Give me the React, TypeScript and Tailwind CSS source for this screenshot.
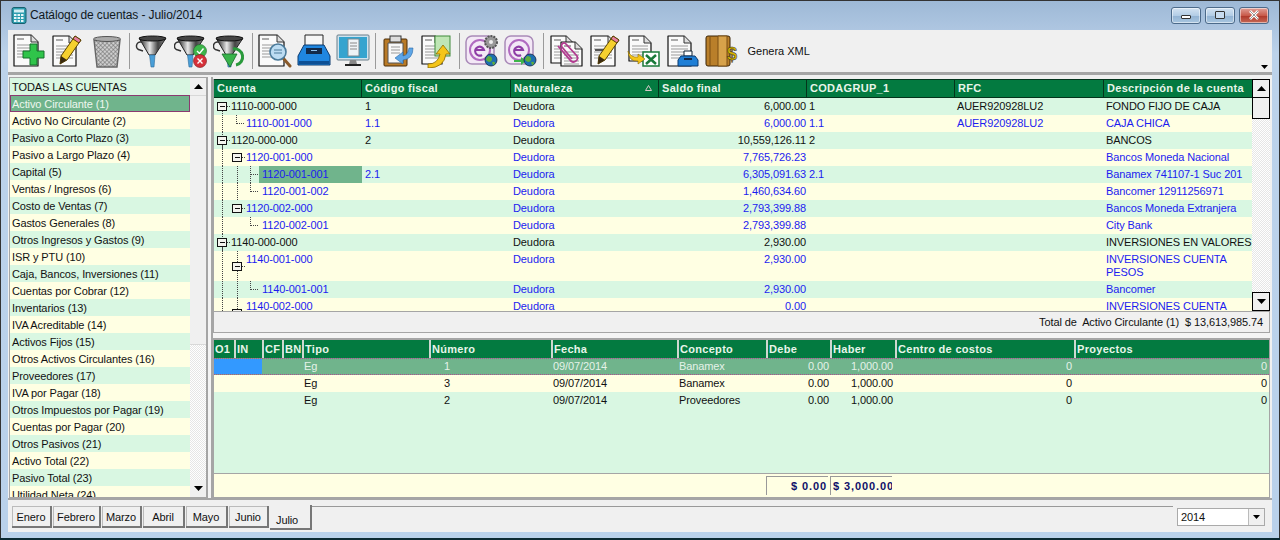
import type { ReactNode } from "react";

const GREEN = "bg-[#d9f7e2]";
const YELLOW = "bg-[#ffffe3]";

const sideItems = [
  "Activo Circulante (1)", "Activo No Circulante (2)", "Pasivo a Corto Plazo (3)", "Pasivo a Largo Plazo (4)",
  "Capital (5)", "Ventas / Ingresos (6)", "Costo de Ventas (7)", "Gastos Generales (8)", "Otros Ingresos y Gastos (9)",
  "ISR y PTU (10)", "Caja, Bancos, Inversiones (11)", "Cuentas por Cobrar (12)", "Inventarios (13)", "IVA Acreditable (14)",
  "Activos Fijos (15)", "Otros Activos Circulantes (16)", "Proveedores (17)", "IVA por Pagar (18)",
  "Otros Impuestos por Pagar (19)", "Cuentas por Pagar (20)", "Otros Pasivos (21)", "Activo Total (22)",
  "Pasivo Total (23)", "Utilidad Neta (24)",
];

type TreeRow = {
  cuenta: string;
  codigo?: string;
  saldo: string;
  agrup?: string;
  rfc?: string;
  desc: string;
  blue?: boolean;
  tall?: boolean;
  lines: number[]; // vertical dotted guides
  box?: number;
  corner?: number;
  tee?: number;
  indent: number;
  selected?: boolean;
};

const treeRows: TreeRow[] = [
  { cuenta: "1110-000-000", codigo: "1", saldo: "6,000.00", agrup: "1", rfc: "AUER920928LU2", desc: "FONDO FIJO DE CAJA", lines: [], box: 8, indent: 17 },
  { cuenta: "1110-001-000", codigo: "1.1", saldo: "6,000.00", agrup: "1.1", rfc: "AUER920928LU2", desc: "CAJA CHICA", blue: true, lines: [8], corner: 23, indent: 32 },
  { cuenta: "1120-000-000", codigo: "2", saldo: "10,559,126.11", agrup: "2", desc: "BANCOS", lines: [8], box: 8, indent: 17 },
  { cuenta: "1120-001-000", saldo: "7,765,726.23", desc: "Bancos Moneda Nacional", blue: true, lines: [8], box: 23, indent: 32 },
  { cuenta: "1120-001-001", codigo: "2.1", saldo: "6,305,091.63", agrup: "2.1", desc: "Banamex 741107-1 Suc 201", blue: true, lines: [8, 23], tee: 37, indent: 45, selected: true },
  { cuenta: "1120-001-002", saldo: "1,460,634.60", desc: "Bancomer 12911256971", blue: true, lines: [8, 23], corner: 37, indent: 48 },
  { cuenta: "1120-002-000", saldo: "2,793,399.88", desc: "Bancos Moneda Extranjera", blue: true, lines: [8], box: 23, indent: 32 },
  { cuenta: "1120-002-001", saldo: "2,793,399.88", desc: "City Bank", blue: true, lines: [8], corner: 37, indent: 48 },
  { cuenta: "1140-000-000", saldo: "2,930.00", desc: "INVERSIONES EN VALORES", lines: [8], box: 8, indent: 17 },
  { cuenta: "1140-001-000", saldo: "2,930.00", desc: "INVERSIONES CUENTA PESOS", blue: true, tall: true, lines: [8, 23], box: 23, indent: 32 },
  { cuenta: "1140-001-001", saldo: "2,930.00", desc: "Bancomer", blue: true, lines: [8, 23], corner: 37, indent: 48 },
  { cuenta: "1140-002-000", saldo: "0.00", desc: "INVERSIONES CUENTA PESOS", blue: true, tall: true, lines: [8, 23], box: 23, indent: 32 },
];

const GRID1 = "grid grid-cols-[148px_149px_148px_148px_148px_149px_148px]";
const GRID2 = "grid grid-cols-[20px_28px_20px_20px_127px_122px_126px_89px_64px_65px_179px_195px]";

const polizas = [
  { tipo: "Eg", num: "1", fecha: "09/07/2014", concepto: "Banamex" },
  { tipo: "Eg", num: "3", fecha: "09/07/2014", concepto: "Banamex" },
  { tipo: "Eg", num: "2", fecha: "09/07/2014", concepto: "Proveedores" },
];

function TreeGlyph({ row }: { row: TreeRow }) {
  const h = row.tall ? 30 : 17;
  const cy = Math.floor(h / 2) + 0.5;
  return (
    <svg width={row.indent} height={h} className="shrink-0" shapeRendering="crispEdges">
      {row.lines.map((x) => (
        <line key={x} x1={x + 0.5} x2={x + 0.5} y1={0} y2={h} stroke="#444" strokeDasharray="1 1" />
      ))}
      {row.box === 8 && <line x1={8.5} x2={8.5} y1={cy} y2={h} stroke="#444" strokeDasharray="1 1" />}
      {row.corner !== undefined && (
        <>
          <line x1={row.corner - 0.5} x2={row.corner - 0.5} y1={0} y2={cy} stroke="#444" strokeDasharray="1 1" />
          <line x1={row.corner - 0.5} x2={row.corner + 8} y1={cy} y2={cy} stroke="#444" strokeDasharray="1 1" />
        </>
      )}
      {row.tee !== undefined && (
        <>
          <line x1={row.tee - 0.5} x2={row.tee - 0.5} y1={0} y2={h} stroke="#444" strokeDasharray="1 1" />
          <line x1={row.tee - 0.5} x2={row.tee + 8} y1={cy} y2={cy} stroke="#444" strokeDasharray="1 1" />
        </>
      )}
      {row.box !== undefined && (
        <>
          <line x1={row.box + 5} x2={row.box + 8} y1={cy} y2={cy} stroke="#444" strokeDasharray="1 1" />
          <rect x={row.box - 4.5} y={cy - 4} width={9} height={8} fill="#f4f4ee" stroke="#111" />
          <line x1={row.box - 2} x2={row.box + 3} y1={cy} y2={cy} stroke="#111" />
        </>
      )}
    </svg>
  );
}

// --- toolbar drawings ---
function Page({ x = 4, y = 2, w = 22, h = 29 }: { x?: number; y?: number; w?: number; h?: number }) {
  const r = x + w;
  const b = y + h;
  return (
    <g>
      <path d={`M${x} ${y}H${r - 7}L${r} ${y + 7}V${b}H${x}Z`} fill="#fafafa" stroke="#111" strokeWidth="1.2" strokeLinejoin="round" />
      <path d={`M${r - 7} ${y}V${y + 7}H${r}`} fill="#ddd" stroke="#333" />
      <path d={`M${x + 3} ${y + 4}h7`} stroke="#888" strokeWidth="1.4" />
      {[10, 13, 16, 19, 22].map((d) => (
        <path key={d} d={`M${x + 3} ${y + d}H${r - 3}`} stroke="#999" />
      ))}
    </g>
  );
}

function Pencil({ dx = 0, dy = 0 }: { dx?: number; dy?: number }) {
  return (
    <g transform={`translate(${dx} ${dy})`}>
      <path d="M24 2l6 4-14 20-7 4 1-8z" fill="#f6d02e" stroke="#5a4300" />
      <path d="M24 2l6 4-2 3-6-4z" fill="#e77fa0" stroke="#5a4300" />
      <path d="M9 30l1-8 6 4z" fill="#3a2a10" />
    </g>
  );
}

function Funnel({ small }: { small?: boolean }) {
  return (
    <g transform={small ? "translate(-1 0)" : undefined}>
      <defs>
        <linearGradient id="metal" x1="0" x2="1">
          <stop offset="0" stopColor="#111" />
          <stop offset="0.4" stopColor="#e8e8e8" />
          <stop offset="0.7" stopColor="#444" />
          <stop offset="1" stopColor="#888" />
        </linearGradient>
      </defs>
      <path d="M6 8a4 4 0 0 0-1 8l3 1" fill="none" stroke="#333" strokeWidth="1.5" />
      <path d="M4 4h27L20 21h-6z" fill="url(#metal)" stroke="#222" />
      <ellipse cx="17.500" cy="4.500" rx="13.500" ry="2.500" fill="#444" stroke="#111" />
      <path d="M14.500 21h5.500l-1 12h-3z" fill="#4a9fd8" stroke="#2b6a99" strokeWidth="0.6" />
    </g>
  );
}

function ESpiral() {
  return (
    <g>
      <rect x="1" y="2" width="28" height="28" rx="6" fill="#f3e8f6" stroke="#a98ab8" strokeWidth="1.5" />
      <circle cx="15" cy="16" r="10" fill="none" stroke="#b06ac0" strokeWidth="2" />
      <path d="M10 16h9a4.500 4.500 0 1 0-2 5" fill="none" stroke="#8e3ca6" strokeWidth="2.200" />
    </g>
  );
}

function Globe({ cx = 26, cy = 26, r = 6 }: { cx?: number; cy?: number; r?: number }) {
  return (
    <g>
      <circle cx={cx} cy={cy} r={r} fill="#1d6fb0" stroke="#124" strokeWidth="0.8" />
      <path d={`M${cx - 3} ${cy - 4}q4 0 4 3t-3 3q-3-1-3-3zM${cx + 1} ${cy + 2}q3-1 3 1t-2 2z`} fill="#5fae3c" />
    </g>
  );
}

const toolbarIcons: ReactNode[][] = [
  [
    <>
      <Page x={2} y={1} w={24} h={31} />
      <path d="M18 10h7v7h7v7h-7v7h-7v-7h-7v-7h7z" fill="#2fc44a" stroke="#14702a" />
    </>,
    <>
      <Page x={2} y={2} w={23} h={30} />
      <Pencil />
    </>,
    <>
      <defs>
        <pattern id="mesh" width="3" height="3" patternUnits="userSpaceOnUse" patternTransform="rotate(45)">
          <rect width="3" height="3" fill="#cfcfcf" />
          <path d="M0 0h3M0 0v3" stroke="#666" />
        </pattern>
      </defs>
      <path d="M4 6h26l-3 27H7z" fill="url(#mesh)" stroke="#666" strokeWidth="1.4" />
      <ellipse cx="17" cy="5" rx="13.500" ry="2.500" fill="#aaa" stroke="#555" />
    </>,
  ],
  [
    <Funnel />,
    <>
      <Funnel small />
      <circle cx="26" cy="17" r="6.500" fill="#3db54a" stroke="#1d6b2a" strokeWidth="0.6" />
      <path d="M23 17l2.500 2.500 4-5" fill="none" stroke="#fff" strokeWidth="1.4" />
      <circle cx="26" cy="27" r="6.500" fill="#d6313a" stroke="#7a1318" strokeWidth="0.6" />
      <path d="M23.500 24.500l5 5m0-5l-5 5" stroke="#fff" strokeWidth="1.4" />
    </>,
    <>
      <Funnel small />
      <path d="M9 20l8 13 7-13z" fill="#38b34a" stroke="#17692a" strokeWidth="0.8" />
      <path d="M20 15a8 8 0 1 1 3 16" fill="none" stroke="#2a9a3c" strokeWidth="3" />
    </>,
  ],
  [
    <>
      <Page x={1} y={1} w={25} h={31} />
      <path d="M25 24l7 8" stroke="#8a5a2a" strokeWidth="3" strokeLinecap="round" />
      <circle cx="20" cy="18" r="8" fill="#bcdcf2" stroke="#4a7a9a" strokeWidth="1.6" />
      <path d="M16 16h8M16 19h8" stroke="#4a7a9a" />
    </>,
    <>
      <path d="M8 1h18v13H8z" fill="#f6f6f6" stroke="#222" />
      <path d="M7 11h20l6 11v9H1v-9z" fill="#1f86e0" stroke="#0c3a6e" />
      <rect x="9" y="14" width="16" height="6" fill="#122a4a" />
      <rect x="14" y="16" width="6" height="1" fill="#8fc2ee" />
      <rect x="2" y="27" width="30" height="3" fill="#0d4f94" />
    </>,
    <>
      <rect x="1" y="1" width="32" height="25" rx="1" fill="#cfe3ee" stroke="#6a7f8a" />
      <rect x="3" y="3" width="28" height="21" fill="#35a4cf" />
      <rect x="12" y="5" width="11" height="17" fill="#eef4f7" stroke="#7a8a92" />
      <path d="M14 9h7M14 12h7M14 15h7" stroke="#888" />
      <path d="M14 26h6l1 4h-8z" fill="#888" />
      <rect x="9" y="30" width="16" height="2" fill="#222" />
    </>,
  ],
  [
    <>
      <rect x="3" y="5" width="23" height="27" rx="1" fill="#b97a26" stroke="#4a2c08" />
      <rect x="9" y="2" width="11" height="6" fill="#ddd" stroke="#333" />
      <path d="M7 9h15v20H7z" fill="#f8f8f8" stroke="#555" />
      <path d="M10 13h9M10 16h9M10 19h9" stroke="#999" />
      <path d="M32 14q0 11-10 12v4l-8-6 8-6v4q5-1 6-8z" fill="#5da5e6" stroke="#2a6aa8" strokeWidth="0.6" />
    </>,
    <>
      <Page x={2} y={2} w={20} h={28} />
      <rect x="15" y="2" width="15" height="20" fill="#bfe6b5" stroke="#3f8a3a" />
      <path d="M8 30q10 0 12-10h-4l7-9 7 9h-4q-2 14-18 14z" fill="#f5c518" stroke="#8a6a00" strokeWidth="0.8" />
    </>,
  ],
  [
    <>
      <ESpiral />
      <circle cx="26" cy="8" r="6" fill="#999" stroke="#555" strokeWidth="2" strokeDasharray="2 1" />
      <circle cx="26" cy="8" r="2" fill="#eee" />
      <Globe />
    </>,
    <>
      <ESpiral />
      <path d="M10 26h7v-3l5 4-5 4v-3h-7z" fill="#3db54a" />
      <Globe />
    </>,
  ],
  [
    <>
      <Page x={2} y={2} w={22} h={27} />
      <Page x={12} y={8} w={21} h={24} />
      <path d="M9 12l13 15a4 4 0 0 0 6-5L17 10a2.500 2.500 0 0 0-4 3l10 12" fill="none" stroke="#b23a90" strokeWidth="1.8" />
    </>,
    <>
      <Page x={3} y={2} w={24} h={30} />
      <rect x="7" y="15" width="16" height="2" fill="#555" />
      <Pencil dx={1} dy={0} />
    </>,
    <>
      <Page x={2} y={2} w={22} h={25} />
      <rect x="16" y="18" width="16" height="14" fill="#fff" stroke="#1a7a3a" strokeWidth="1.5" />
      <path d="M19 21l10 9m0-9l-10 9" stroke="#1a7a3a" strokeWidth="2.500" />
      <path d="M1 17q3 7 10 6v-3l7 5-7 5v-3Q2 28 1 17z" fill="#f5c518" stroke="#8a6a00" strokeWidth="0.6" />
    </>,
    <>
      <Page x={2} y={2} w={23} h={30} />
      <path d="M18 17h8v5h-8z" fill="#fff" stroke="#123" />
      <path d="M15 22h14l3 4v6H12v-6z" fill="#1f7fd6" stroke="#0c3a6e" />
      <rect x="18" y="24" width="8" height="2" fill="#122a4a" />
    </>,
    <>
      <rect x="1" y="2" width="24" height="30" rx="2" fill="#b97f2a" stroke="#3a2406" />
      <path d="M5 2v30" stroke="#7a4f12" />
      <path d="M13 2h9v30h-9z" fill="#d7a24a" stroke="#7a4f12" />
      <text x="22" y="26" fontSize="18" fontWeight="bold" fill="#d8b400" stroke="#222" strokeWidth="0.5" fontFamily="Liberation Sans, sans-serif">$</text>
    </>,
  ],
];

function ToolButton({ children }: { children: ReactNode }) {
  return (
    <div className="flex w-[39px] shrink-0 justify-center">
      <svg width="34" height="34" viewBox="0 0 34 34">{children}</svg>
    </div>
  );
}

function Arrow({ up }: { up?: boolean }) {
  return (
    <svg width="9" height="5" viewBox="0 0 9 5">
      <path d={up ? "M4.500 0L9 5H0z" : "M0 0h9L4.500 5z"} fill="#000" />
    </svg>
  );
}

function WinButton({ children, danger }: { children: ReactNode; danger?: boolean }) {
  return (
    <div
      className={`flex h-[17px] w-[30px] items-center justify-center rounded-[3px] border border-[#4c6a8a] shadow-[inset_0_0_0_1px_rgba(255,255,255,0.5)] ${
        danger
          ? "bg-[linear-gradient(#e0a098,#c85a4a_50%,#b03a2c_55%,#c66a58)]"
          : "bg-[linear-gradient(#d4e3f2,#b3cde6_50%,#94b4d4_55%,#a8c6e0)]"
      }`}
    >
      {children}
    </div>
  );
}

const months = [
  ["Enero", "w-[40px]"],
  ["Febrero", "w-[48px]"],
  ["Marzo", "w-[40px]"],
  ["Abril", "w-[42px]"],
  ["Mayo", "w-[42px]"],
  ["Junio", "w-[40px]"],
];

export default function App() {
  return (
    <div className="flex h-[540px] w-[1280px] flex-col overflow-hidden border-b-2 border-b-[#0b2a33] bg-[linear-gradient(#9db8d6,#bcd2ea_10%,#b9d1ea)] font-['Liberation_Sans',sans-serif] text-[11px] leading-[13px] tracking-[-0.1px] text-[#111] shadow-[inset_0_1px_0_#333,inset_1px_0_0_#333,inset_-1px_0_0_#333]">
      {/* title bar */}
      <div className="flex h-[30px] shrink-0 items-center px-[11px]">
        <svg width="16" height="17" viewBox="0 0 16 17">
          <rect x="1" y="0.500" width="14" height="16" rx="2" fill="#2f9eb0" stroke="#17606e" />
          <rect x="3" y="2.500" width="10" height="3" fill="#d4eef2" />
          {[7, 10, 13].map((y) =>
            [3, 6.5, 10].map((x) => <rect key={`${x}-${y}`} x={x} y={y} width="2.500" height="2" fill="#e8f6f8" />),
          )}
        </svg>
        <span className="ml-[3px] text-[12px] text-[#101820]">Catálogo de cuentas - Julio/2014</span>
        <div className="ml-auto flex items-center gap-[4px]">
          <WinButton>
            <div className="mt-[4px] h-[4px] w-[10px] rounded-[1px] border border-[#333] bg-white" />
          </WinButton>
          <WinButton>
            <div className="h-[8px] w-[10px] rounded-[1px] border-[1.5px] border-[#333] bg-[#c8dcf0]" />
          </WinButton>
          <WinButton danger>
            <svg width="12" height="10" viewBox="0 0 12 10">
              <path d="M2 1l8 8m0-8L2 9" stroke="#fff" strokeWidth="2.500" />
              <path d="M2 1l8 8m0-8L2 9" stroke="#333" strokeWidth="0.5" />
            </svg>
          </WinButton>
        </div>
      </div>

      <div className="mx-[8px] flex min-h-0 flex-1 flex-col bg-[#f0f0f0]">
        {/* toolbar */}
        <div className="relative flex h-[45px] shrink-0 items-center border-b-[3px] border-b-[#a5a5a5] pl-[1.500px]">
          {toolbarIcons.map((group, g) => (
            <div key={g} className="flex items-center">
              {g > 0 && <div className="mx-[2.500px] h-[36px] w-px bg-[#9a9a9a]" />}
              {group.map((icon, i) => (
                <ToolButton key={i}>{icon}</ToolButton>
              ))}
            </div>
          ))}
          <span className="ml-[6px] tracking-normal">Genera XML</span>
          <div className="absolute bottom-[3px] right-[4px] leading-[0]">
            <svg width="7" height="4" viewBox="0 0 7 4">
              <path d="M0 0h7L3.500 4z" fill="#000" />
            </svg>
          </div>
        </div>

        {/* panels */}
        <div className="flex h-[423px] shrink-0 pl-px pr-[2px] pt-[2px]">
          {/* accounts list */}
          <div className="flex h-[421px] w-[197px] shrink-0 overflow-hidden border border-r-0 border-[#a5a5a5]">
            <div className="w-[180px] shrink-0 overflow-hidden">
              <div className={`h-[17px] px-[2px] leading-[18px] ${GREEN}`}>TODAS LAS CUENTAS</div>
              {sideItems.map((item, i) =>
                i === 0 ? (
                  <div key={item} className="h-[17px] border border-[#8a3a70] bg-[#70b48c] px-px leading-[16px] text-[#eef7ef]">
                    {item}
                  </div>
                ) : (
                  <div key={item} className={`h-[17px] px-[2px] leading-[18px] ${i % 2 === 1 ? YELLOW : GREEN}`}>
                    {item}
                  </div>
                ),
              )}
            </div>
            <div className="flex w-[16px] shrink-0 flex-col bg-[repeating-conic-gradient(#fff_0_25%,#e6e6e6_0_50%)] bg-[length:2px_2px]">
              <div className="flex h-[17px] items-center justify-center bg-[#f0f0f0]">
                <Arrow up />
              </div>
              <div className="h-[250px] border-y border-[#d8d8d8] bg-[#f0f0f0]" />
              <div className="mt-auto flex h-[17px] items-center justify-center bg-[#f0f0f0]">
                <Arrow />
              </div>
            </div>
          </div>

          {/* splitter */}
          <div className="w-[7px] shrink-0 border-x-[2px] border-x-[#a5a5a5] bg-[#f4f4f4]" />

          {/* right side */}
          <div className="flex h-[421px] min-w-0 flex-1 flex-col pt-[2px]">
            <div className="flex h-[232px] shrink-0 overflow-hidden border-l border-[#a5a5a5]">
              <div className="w-[1038px] shrink-0 overflow-hidden">
                <div className={`${GRID1} h-[19px] border-y border-[#04341c] bg-[#037a40] font-bold tracking-[0.3px] text-[#e8f5ea]`}>
                  {["Cuenta", "Código fiscal", "Naturaleza", "Saldo final", "CODAGRUP_1", "RFC", "Descripción de la cuenta"].map((h) => (
                    <div key={h} className="relative overflow-hidden whitespace-nowrap border-r border-[#04341c] pl-[3px] leading-[17px] last:border-r-0">
                      {h}
                      {h === "Naturaleza" && (
                        <svg className="absolute right-[6px] top-[5px]" width="7" height="6" viewBox="0 0 7 6">
                          <path d="M3.500 0.500L6.500 5.500H0.500z" fill="none" stroke="#d8c8c8" />
                        </svg>
                      )}
                    </div>
                  ))}
                </div>
                {treeRows.map((r, i) => (
                  <div
                    key={r.cuenta}
                    className={`${GRID1} ${r.tall ? "h-[30px]" : "h-[17px]"} ${i % 2 === 0 ? GREEN : YELLOW} ${r.blue ? "text-[#1c1cf0]" : "text-[#111]"}`}
                  >
                    <div className="flex h-full overflow-hidden">
                      <TreeGlyph row={r} />
                      {r.selected ? (
                        <div className="w-full bg-[#70b48c] pl-[3px] pt-[2px]">{r.cuenta}</div>
                      ) : (
                        <div className="pt-[2px]">{r.cuenta}</div>
                      )}
                    </div>
                    <div className="pl-[3px] pt-[2px]">{r.codigo}</div>
                    <div className="pl-[2px] pt-[2px]">Deudora</div>
                    <div className="pr-px pt-[2px] text-right">{r.saldo}</div>
                    <div className="pl-[2px] pt-[2px]">{r.agrup}</div>
                    <div className="pl-[2px] pt-[2px]">{r.rfc}</div>
                    <div className={`pl-[2px] pt-[2px] ${r.tall ? "" : "overflow-hidden whitespace-nowrap"}`}>{r.desc}</div>
                  </div>
                ))}
              </div>
              <div className="flex w-[18px] shrink-0 flex-col bg-[repeating-conic-gradient(#fff_0_25%,#e6e6e6_0_50%)] bg-[length:2px_2px]">
                <div className="flex h-[19px] items-center justify-center border border-black bg-[#f0f0f0]">
                  <Arrow up />
                </div>
                <div className="h-[21px] border border-t-0 border-black bg-[#f0f0f0]" />
                <div className="mt-auto flex h-[19px] items-center justify-center border border-black bg-[#f0f0f0]">
                  <Arrow />
                </div>
              </div>
            </div>
            <div className="flex h-[22px] shrink-0 items-center justify-end border border-[#a5a5a5] bg-[#f0f0f0] pr-[6px]">
              Total de&nbsp; Activo Circulante (1)&nbsp; $ 13,613,985.74
            </div>

            <div className="h-[7px] shrink-0 border-b-[2px] border-b-[#a5a5a5] bg-[#f4f4f4]" />

            <div className="flex min-h-0 flex-1 flex-col border-x border-b border-[#a5a5a5]">
              <div className={`${GRID2} h-[18px] shrink-0 bg-[#037a40] font-bold tracking-[0.3px] text-[#e8f5ea]`}>
                {["O1", "IN", "CF", "BN", "Tipo", "Número", "Fecha", "Concepto", "Debe", "Haber", "Centro de costos", "Proyectos"].map((h) => (
                  <div key={h} className="overflow-hidden whitespace-nowrap border-l-[2px] border-[#cfd8d0] pl-px leading-[18px] first:border-l-0">
                    {h}
                  </div>
                ))}
              </div>
              <div className={`min-h-0 flex-1 ${GREEN}`}>
                {polizas.map((p, i) => (
                  <div
                    key={p.num}
                    className={`${GRID2} h-[17px] leading-[15px] ${
                      i === 0
                        ? "border-y border-dotted border-[#b04a90] bg-[#70b48c] text-[#e4f2e8]"
                        : i === 1
                          ? `${YELLOW} border-y border-transparent`
                          : `${GREEN} border-y border-transparent`
                    }`}
                  >
                    <div className={`col-span-2 ${i === 0 ? "bg-[#3399ff]" : ""}`} />
                    <div />
                    <div />
                    <div className="pl-[2px]">{p.tipo}</div>
                    <div className="pl-[15px]">{p.num}</div>
                    <div className="pl-[2px]">{p.fecha}</div>
                    <div className="pl-[2px]">{p.concepto}</div>
                    <div className="pr-px text-right">0.00</div>
                    <div className="pr-[2px] text-right">1,000.00</div>
                    <div className="pr-[2px] text-right">0</div>
                    <div className="pr-[2px] text-right">0</div>
                  </div>
                ))}
              </div>
              <div className={`flex h-[24px] shrink-0 items-center border-t border-[#a5a5a5] pl-[552px] font-bold tracking-[0.9px] text-[#10106a] ${YELLOW}`}>
                <div className="h-[19px] w-[62px] border-l border-t border-[#999] pr-px text-right leading-[18px]">$ 0.00</div>
                <div className="ml-[2px] h-[19px] w-[62px] overflow-hidden whitespace-nowrap border-l border-t border-[#999] pl-[2px] leading-[18px]">$ 3,000.00</div>
              </div>
            </div>
          </div>
        </div>

        {/* month tabs */}
        <div className="flex h-[34px] shrink-0 items-start border-t-2 border-t-[#a5a5a5] pl-[4px]">
          <div className="flex pt-[6px]">
            {months.map(([m, w]) => (
              <div
                key={m}
                className={`${w} mr-px h-[22px] border-b-2 border-r-2 border-b-[#777] border-r-[#777] bg-[#f0f0f0] text-center leading-[22px] shadow-[inset_1px_1px_0_#bbb]`}
              >
                {m}
              </div>
            ))}
          </div>
          <div className="mt-[5px] h-[25px] w-[42px] border-b-2 border-r-2 border-b-[#777] border-r-[#777] bg-[#f0f0f0] pl-[6px] pt-[9px]">Julio</div>
          <div className="mt-[6px] h-[24px] w-[861px] border-t border-[#999]" />
          <div className="ml-[4px] mt-[8px] flex h-[18px] w-[88px] items-center border border-[#aaa] bg-white pl-[3px]">
            2014
            <div className="ml-auto flex h-[16px] w-[16px] items-center justify-center border-l border-[#bbb] bg-[#f0f0f0]">
              <svg width="7" height="4" viewBox="0 0 7 4">
                <path d="M0 0h7L3.500 4z" fill="#000" />
              </svg>
            </div>
          </div>
        </div>
      </div>
      <div className="h-[6px] shrink-0" />
    </div>
  );
}
